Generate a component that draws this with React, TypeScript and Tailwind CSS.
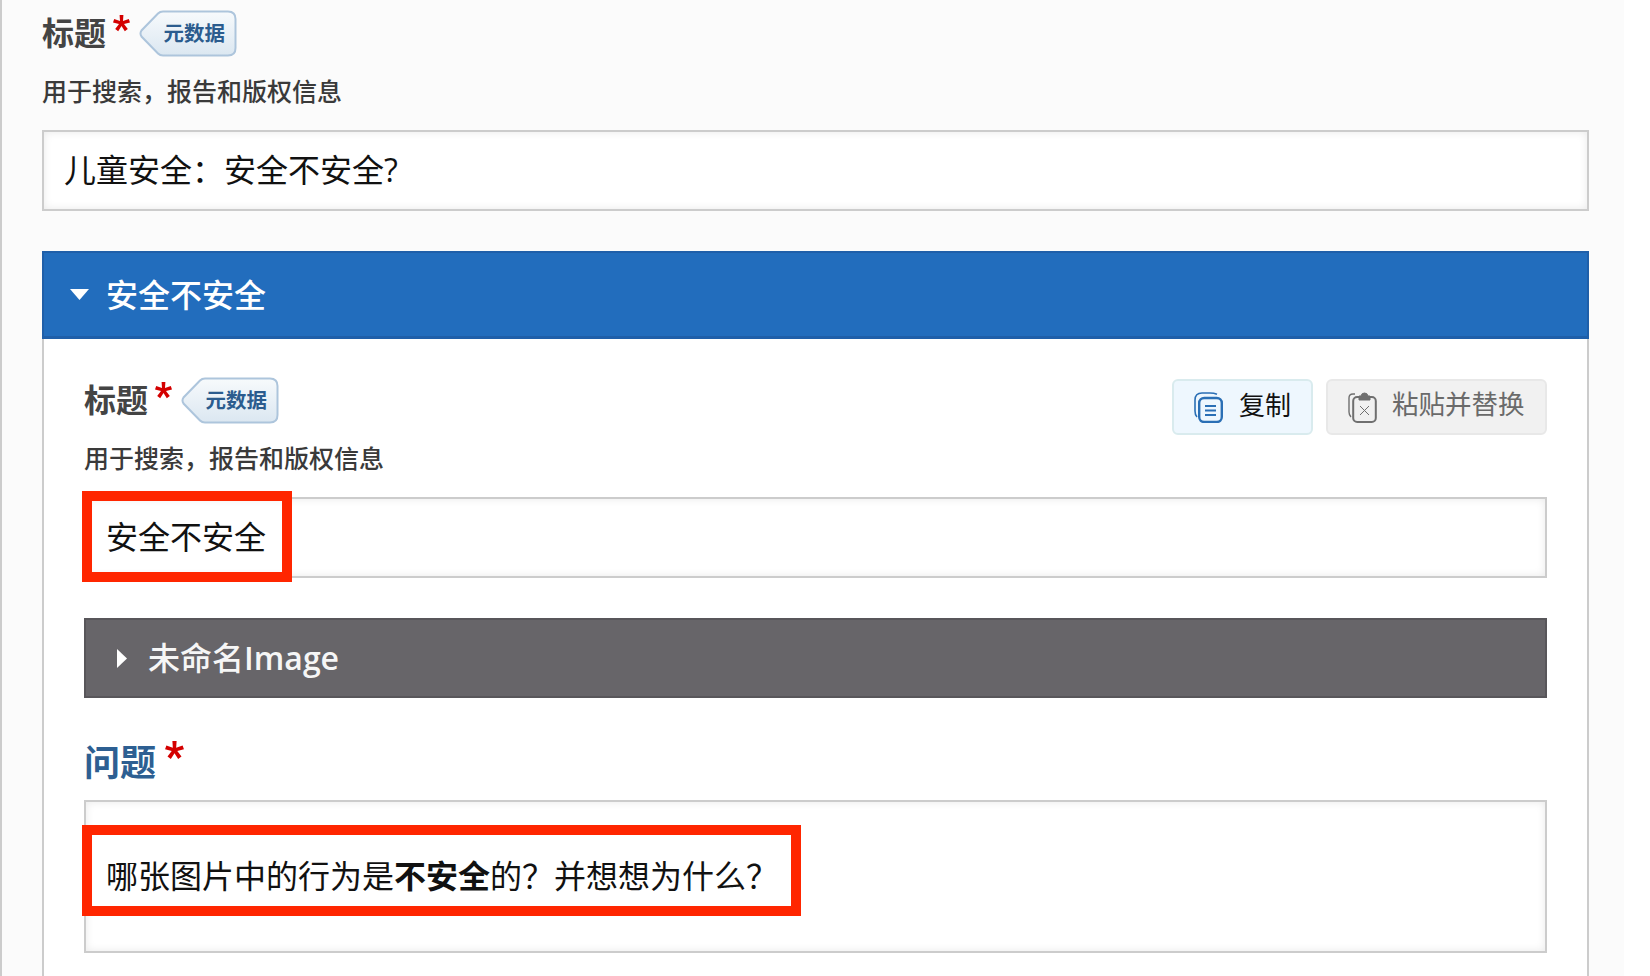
import React from 'react';

const cjk = "font-['Open_Sans','Noto_Sans_CJK_SC',sans-serif]";

const MetaBadge: React.FC = () => (
  <div className="relative ml-[9px] mt-[10px] flex h-[47px] w-[98px] shrink-0 items-center justify-end pr-[12px]">
    <svg className="absolute inset-0" width="98" height="47" viewBox="0 0 98 47">
      <defs>
        <linearGradient id="badgeFill" x1="0" y1="0" x2="0" y2="1">
          <stop offset="0" stopColor="#f7fafc" />
          <stop offset="1" stopColor="#dbe7f1" />
        </linearGradient>
      </defs>
      <path
        d="M24 1.5 H89 Q96.5 1.5 96.5 9 V38 Q96.5 45.5 89 45.5 H24 Q21 45.5 19 43.5 L2.5 26.5 Q0.5 23.5 2.5 20.5 L19 3.5 Q21 1.5 24 1.5 Z"
        fill="url(#badgeFill)"
        stroke="#adc5dc"
        strokeWidth="2"
      />
    </svg>
    <span className="relative text-[20.5px] font-semibold leading-none text-[#2b5c8e]">元数据</span>
  </div>
);

const Star: React.FC<{ className: string; size?: number }> = ({ className, size = 17 }) => (
  <svg className={`shrink-0 ${className}`} width={size} height={size + 1} viewBox="0 0 17 18">
    <path
      d="M6.6 0 H10.4 L10 6 L15.8 4 L17 7.4 L11 8.9 L14.8 14 L11.8 16.2 L8.5 11 L5.2 16.2 L2.2 14 L6 8.9 L0 7.4 L1.2 4 L7 6 Z"
      fill="#d40000"
    />
  </svg>
);

const FieldLabel: React.FC<{ children?: React.ReactNode }> = ({ children }) => (
  <div className="flex h-[76px] items-start">
    <span className="mt-[15px] text-[32px] font-bold leading-[36px] text-[#444]">标题</span>
    <Star className="ml-[7px] mt-[15px]" />
    <MetaBadge />
    {children}
  </div>
);

const HelpText: React.FC = () => (
  <div className="h-[31px] text-[25px] font-medium leading-[30px] text-[#3a3a3a]">用于搜索，报告和版权信息</div>
);

const TextBox: React.FC<{ className?: string; children?: React.ReactNode }> = ({ className, children }) => (
  <div
    className={`flex items-center border-2 border-[#ccc] bg-white pb-[2px] pl-[20px] text-[32px] text-[#111] shadow-[inset_0_0_8px_rgba(0,0,0,0.09)] ${className ?? ''}`}
  >
    {children}
  </div>
);

const CopyIcon: React.FC = () => (
  <svg className="shrink-0" width="29" height="31" viewBox="0 0 29 31" fill="none" stroke="#2a6fb5">
    <path d="M23 2.2 Q20 1 16 1 H8 Q1 1 1 8 V19 Q1 23 3 25" strokeWidth="1.6" />
    <rect x="5.2" y="6" width="22.6" height="24" rx="5" strokeWidth="2.4" />
    <path d="M11 14 H22 M11 18.5 H22 M11 23 H22" strokeWidth="2" />
  </svg>
);

const PasteIcon: React.FC = () => (
  <svg className="shrink-0" width="29" height="31" viewBox="0 0 29 31" fill="none" stroke="#6f6f6f">
    <path d="M7 2 H5 Q1 2 1 6 V20 Q1 23 3 25" strokeWidth="1.4" />
    <rect x="5.2" y="5" width="22.6" height="25" rx="4" strokeWidth="2" />
    <path d="M11 4 H13 Q13.5 1 16.5 1 Q19.5 1 20 4 H22 V8 H11 Z" fill="#6f6f6f" strokeWidth="1" />
    <path d="M12 14 L21 23 M21 14 L12 23" strokeWidth="1" />
  </svg>
);

const RedBox: React.FC<{ className: string }> = ({ className }) => (
  <div className={`absolute border-[10px] border-[#ff2600] ${className}`} />
);

export default function App() {
  return (
    <div className={`flex h-[976px] w-[1650px] overflow-hidden bg-white ${cjk}`}>
      <div className="h-full w-[1624px] border-l-2 border-[#ccc] bg-[#fbfbfb] pl-[40px] pr-[35px]">
        <FieldLabel />
        <HelpText />
        <TextBox className="mt-[23px] h-[81px]">儿童安全：安全不安全?</TextBox>

        <div className="mt-[40px] flex h-[88px] items-center border-2 border-b-[3px] border-[#1f5fa9] bg-[#226dbd] pl-[26px] text-white">
          <svg width="19" height="11" viewBox="0 0 19 11">
            <path d="M0 0 H19 L9.5 11 Z" fill="#fff" />
          </svg>
          <span className="ml-[17px] text-[32px] font-medium">安全不安全</span>
        </div>

        <div className="h-[637px] border-x-2 border-[#ccc] bg-white px-[40px] pt-[28px]">
          <FieldLabel>
            <div className="ml-auto mt-[12px] flex gap-[13px]">
              <button className="flex h-[56px] w-[141px] items-center rounded-[6px] border-2 border-[#d9ebee] bg-[#eef7fe] pl-[20px] text-[26px] text-[#111]">
                <CopyIcon />
                <span className="ml-[16px] -translate-y-[2px]">复制</span>
              </button>
              <button className="flex h-[56px] w-[221px] items-center rounded-[6px] border-2 border-[#e8e8e8] bg-[#f1f1f1] pl-[20px] text-[26.5px] text-[#6a6a6a]">
                <PasteIcon />
                <span className="ml-[15px] -translate-y-[2px]">粘贴并替换</span>
              </button>
            </div>
          </FieldLabel>
          <HelpText />
          <div className="relative mt-[23px]">
            <TextBox className="h-[81px]">安全不安全</TextBox>
            <RedBox className="left-[-2px] top-[-6px] h-[91px] w-[210px]" />
          </div>

          <div className="mt-[40px] flex h-[80px] items-center border-2 border-[#58565a] bg-[#676569] pl-[31px] text-white">
            <svg width="11" height="19" viewBox="0 0 11 19">
              <path d="M0 0 L10 9.5 L0 19 Z" fill="#fff" />
            </svg>
            <span className="ml-[20px] text-[32px] font-medium text-[#f6f6f6]">
              未命名<span className="font-semibold">Image</span>
            </span>
          </div>

          <div className="mt-[40px] flex h-[62px] items-start">
            <span className="mt-[3px] text-[36px] font-bold leading-[44px] text-[#2d5f92]">问题</span>
            <Star className="ml-[9px] mt-[3px]" size={19} />
          </div>
          <div className="relative">
            <TextBox className="h-[153px]">
              <span>
                哪张图片中的行为是<b>不安全</b>的？并想想为什么？
              </span>
            </TextBox>
            <RedBox className="left-[-2px] top-[25px] h-[91px] w-[719px]" />
          </div>
        </div>
      </div>
    </div>
  );
}
